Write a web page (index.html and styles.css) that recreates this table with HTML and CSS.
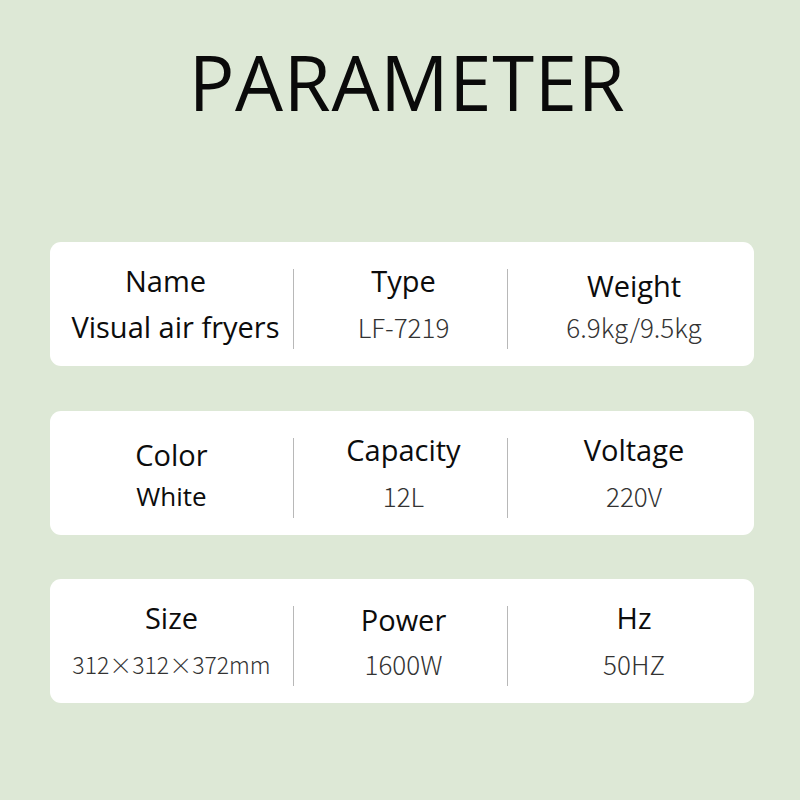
FILE: index.html
```html
<!DOCTYPE html>
<html lang="en">
<head>
<meta charset="utf-8">
<title>Parameter</title>
<link rel="stylesheet" href="styles.css">
</head>
<body>
<main class="page">
  <h1 class="title">PARAMETER</h1>
  <section class="cards">
    <div class="card">
      <div class="cell"><span class="label label-left">Name</span><span class="value value-dark value-shift">Visual air fryers</span></div>
      <div class="cell"><span class="label">Type</span><span class="value">LF-7219</span></div>
      <div class="cell"><span class="label label-low">Weight</span><span class="value">6.9kg/9.5kg</span></div>
    </div>
    <div class="card">
      <div class="cell"><span class="label label-low">Color</span><span class="value value-dark value-small">White</span></div>
      <div class="cell"><span class="label">Capacity</span><span class="value">12L</span></div>
      <div class="cell"><span class="label">Voltage</span><span class="value">220V</span></div>
    </div>
    <div class="card card-last">
      <div class="cell"><span class="label">Size</span><span class="value value-size">312×312×372mm</span></div>
      <div class="cell"><span class="label label-low-s">Power</span><span class="value">1600W</span></div>
      <div class="cell"><span class="label">Hz</span><span class="value">50HZ</span></div>
    </div>
  </section>
</main>
</body>
</html>
```

FILE: styles.css
```css
html, body {
  margin: 0;
  padding: 0;
}
body {
  background: #dde8d6;
  width: 800px;
  height: 800px;
  overflow: hidden;
}
.page {
  display: flex;
  flex-direction: column;
  align-items: center;
}
.title {
  margin: 32px 0 0;
  padding-left: 14px;
  font-family: "Open Sans", sans-serif;
  font-weight: 400;
  font-size: 76px;
  line-height: 100px;
  color: #0a0a0a;
  letter-spacing: 0.7px;
}
.cards {
  align-self: flex-start;
  margin: 110px 0 0 50px;
  display: flex;
  flex-direction: column;
  gap: 45px;
}
.card {
  width: 704px;
  box-sizing: border-box;
  height: 124px;
  background: #ffffff;
  border-radius: 11px;
  padding: 27px 0 17px;
  display: grid;
  grid-template-columns: 243px 214px 247px;
}
.card-last {
  margin-top: -1px;
}
.cell {
  display: flex;
  flex-direction: column;
  align-items: center;
  justify-content: center;
  height: 80px;
  box-sizing: border-box;
  padding-bottom: 10px;
}
.cell + .cell {
  border-left: 1px solid #b8b8b8;
  padding-left: 6px;
}
.label {
  font-family: "Open Sans", sans-serif;
  font-size: 29px;
  line-height: 46px;
  color: #0c0c0c;
  white-space: nowrap;
}
.label-left {
  margin-right: 12px;
}
.label-low {
  padding-top: 10px;
  line-height: 36px;
}
.label-low-s {
  padding-top: 4px;
  line-height: 42px;
}
.value {
  font-family: "Noto Sans CJK SC", "Noto Sans", sans-serif;
  font-weight: 300;
  font-size: 26px;
  line-height: 46px;
  color: #333333;
  white-space: nowrap;
}
.value-dark {
  font-family: "Open Sans", sans-serif;
  font-weight: 400;
  font-size: 29px;
  color: #0c0c0c;
}
.value-shift {
  margin-left: 8px;
}
.value-small {
  font-size: 26px;
}
.value-size {
  font-size: 23px;
}
```
